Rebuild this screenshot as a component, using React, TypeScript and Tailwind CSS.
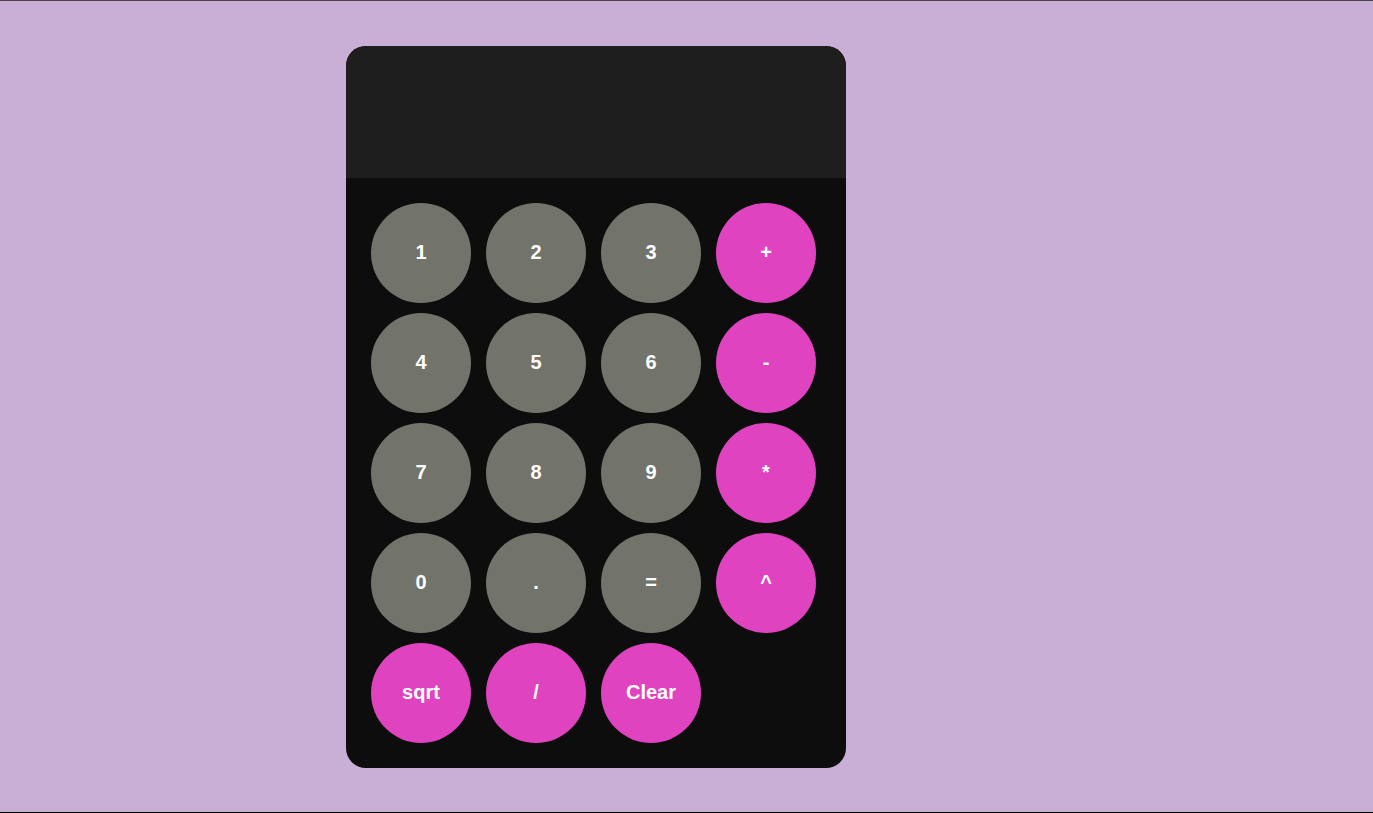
export default function App() {
  const keys: { label: string; op?: boolean }[] = [
    { label: '1' }, { label: '2' }, { label: '3' }, { label: '+', op: true },
    { label: '4' }, { label: '5' }, { label: '6' }, { label: '-', op: true },
    { label: '7' }, { label: '8' }, { label: '9' }, { label: '*', op: true },
    { label: '0' }, { label: '.' }, { label: '=' }, { label: '^', op: true },
    { label: 'sqrt', op: true }, { label: '/', op: true }, { label: 'Clear', op: true },
  ]

  return (
    <div className="h-[813px] bg-[#c9afd6] border-t border-t-[#4b424d] border-b border-b-black pt-[45px] pl-[346px] font-['Liberation_Sans',Arial,sans-serif]">
      <div className="w-[500px] rounded-[20px] overflow-hidden bg-[#0d0d0d]">
        {/* Display */}
        <div className="h-[132px] bg-[#1e1e1e]" />

        {/* Keypad */}
        <div className="grid grid-cols-[repeat(4,100px)] gap-x-[15px] gap-y-[10px] p-[25px]">
          {keys.map((k) => (
            <button
              key={k.label}
              className={`w-[100px] h-[100px] rounded-full flex items-center justify-center pb-[2px] text-white text-[20px] font-bold ${
                k.op ? 'bg-[#df43bf]' : 'bg-[#72736b]'
              }`}
            >
              {k.label}
            </button>
          ))}
        </div>
      </div>
    </div>
  )
}
